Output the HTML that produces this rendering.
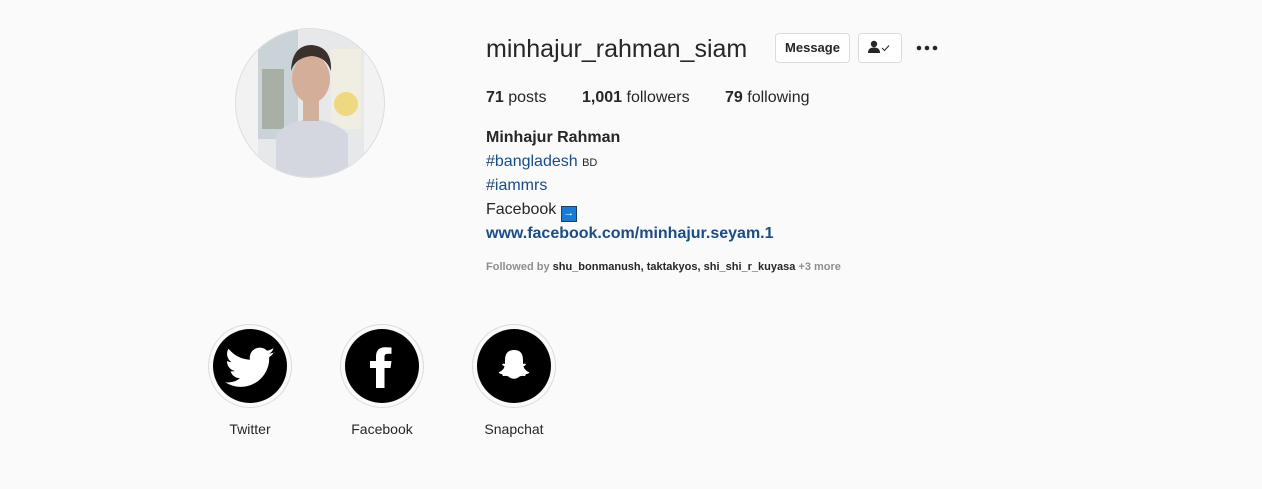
<!DOCTYPE html>
<html><head><style>
body{margin:0;width:1262px;height:489px;background:#fafafa;font-family:"Liberation Sans",sans-serif;color:#262626;position:relative;overflow:hidden}
.a{position:absolute;white-space:nowrap}
.btn{position:absolute;border:1px solid #dbdbdb;border-radius:4px;background:#fff;box-sizing:border-box}
.hl{position:absolute;width:84px;height:84px;border:1px solid #dbdbdb;border-radius:50%;box-sizing:border-box;background:#fafafa}
.hl .in{position:absolute;left:4px;top:4px;width:74px;height:74px;border-radius:50%;background:#000;overflow:hidden}
.lbl{position:absolute;width:120px;text-align:center;font-size:14px;top:421px}
b{font-weight:bold}
.bl{color:#1a4c85}
</style></head><body>
<div class="a" style="left:235px;top:28px;width:150px;height:150px;border-radius:50%;background:#f2f2f2;border:1px solid #ddd;box-sizing:border-box;overflow:hidden">
<svg width="150" height="150" viewBox="0 0 150 150">
<rect x="22" y="0" width="106" height="150" fill="#e6e8ea"/>
<rect x="22" y="0" width="40" height="110" fill="#c9d3d8"/>
<rect x="26" y="40" width="22" height="60" fill="#a8b0a6"/>
<rect x="95" y="20" width="30" height="80" fill="#f0eee2"/>
<circle cx="110" cy="75" r="12" fill="#eed980"/>
<path d="M40 150 L40 105 Q52 92 75 90 Q100 92 112 105 L112 150Z" fill="#d4d7df"/>
<rect x="67" y="70" width="16" height="22" fill="#d2b09c"/>
<ellipse cx="75" cy="50" rx="19" ry="24" fill="#d4ae98"/>
<path d="M55 42 Q56 16 76 16 Q96 18 95 42 Q90 28 76 27 Q60 28 55 42Z" fill="#3a302c"/>
</svg></div>

<div class="a" style="left:486px;top:35px;font-size:25px;color:#262626">minhajur_rahman_siam</div>
<div class="btn" style="left:775px;top:33px;width:75px;height:30px;font-size:13px;font-weight:bold;text-align:center;line-height:28px">Message</div>
<div class="btn" style="left:858px;top:33px;width:44px;height:30px">
<svg width="44" height="30" viewBox="0 0 44 30" style="position:absolute;left:-1px;top:-1px"><circle cx="16" cy="11" r="3.2" fill="#262626"/><path d="M10 20 Q10 14.5 16 14.5 Q22 14.5 22 20Z" fill="#262626"/><path d="M24 15 l2.5 2.5 l4.5-5" stroke="#262626" stroke-width="1" fill="none"/></svg></div>
<svg class="a" style="left:915px;top:44px" width="24" height="8"><circle cx="4" cy="4" r="2.3" fill="#262626"/><circle cx="12" cy="4" r="2.3" fill="#262626"/><circle cx="20" cy="4" r="2.3" fill="#262626"/></svg>

<div class="a" style="left:486px;top:89px;font-size:16px"><b>71</b> posts</div>
<div class="a" style="left:582px;top:89px;font-size:16px"><b>1,001</b> followers</div>
<div class="a" style="left:725px;top:89px;font-size:16px"><b>79</b> following</div>

<div class="a" style="left:486px;top:129px;font-size:16px;font-weight:bold">Minhajur Rahman</div>
<div class="a bl" style="left:486px;top:153px;font-size:16px">#bangladesh <span style="font-size:11px;color:#262626">BD</span></div>
<div class="a bl" style="left:486px;top:177px;font-size:16px">#iammrs</div>
<div class="a" style="left:486px;top:201px;font-size:16px">Facebook <span style="display:inline-block;width:16px;height:16px;background:#1a7ad4;border:1px solid #1b3f66;box-sizing:border-box;vertical-align:-2px;color:#fff;font-size:11px;line-height:13px;text-align:center">→</span></div>
<div class="a" style="left:486px;top:225px;font-size:16px;font-weight:bold;color:#1a4c85">www.facebook.com/minhajur.seyam.1</div>
<div class="a" style="left:486px;top:261px;font-size:11px;color:#8e8e8e;font-weight:bold">Followed by <span style="color:#262626">shu_bonmanush, taktakyos, shi_shi_r_kuyasa</span> +3 more</div>

<div class="hl" style="left:208px;top:324px"><div class="in">
<svg width="74" height="74" viewBox="0 0 74 74"><path d="M62 23 q-3 1.5-6 1.8 q3.5-2 4.5-5.5 q-3 1.8-6.5 2.4 a10 10 0 0 0-17 9 q-13-0.7-21.5-11 a10 10 0 0 0 3 13.5 q-2.3 0-4.5-1.2 a10 10 0 0 0 8 10 q-2.3 0.6-4.5 0.2 a10 10 0 0 0 9.5 7 a20 20 0 0 1-14.8 4.1 a28.5 28.5 0 0 0 44-25 q3-2.2 5-5.3z" fill="#fff"/></svg></div></div>
<div class="lbl" style="left:190px">Twitter</div>

<div class="hl" style="left:340px;top:324px"><div class="in">
<svg width="74" height="74" viewBox="0 0 74 74"><path d="M39.5 59 V39 h6 l1-7 H39.5 v-4.3 q0-3 3-3 h4 V18.5 q-2.4-0.3-6-0.3 q-9.5 0-9.5 9.5 v4.3 h-6 v7 h6 V59z" fill="#fff"/></svg></div></div>
<div class="lbl" style="left:322px">Facebook</div>

<div class="hl" style="left:472px;top:324px"><div class="in">
<svg width="74" height="74" viewBox="0 0 74 74"><path d="M37 21 q-9 0-9 10 v4 q-1.6-0.8-2.8 0 q-0.4 1.2 2.4 2.4 q-1.2 4-6 6 q0.4 1.4 3.6 1.8 q0.4 2 1.6 1.8 q2.4-0.5 4.4 0.4 q2.8 2.4 5.8 2.4 q3 0 5.8-2.4 q2-0.9 4.4-0.4 q1.2 0.2 1.6-1.8 q3.2-0.4 3.6-1.8 q-4.8-2-6-6 q2.8-1.2 2.4-2.4 q-1.2-0.8-2.8 0 v-4 q0-10-9-10z" fill="#fff"/></svg></div></div>
<div class="lbl" style="left:454px">Snapchat</div>
</body></html>
